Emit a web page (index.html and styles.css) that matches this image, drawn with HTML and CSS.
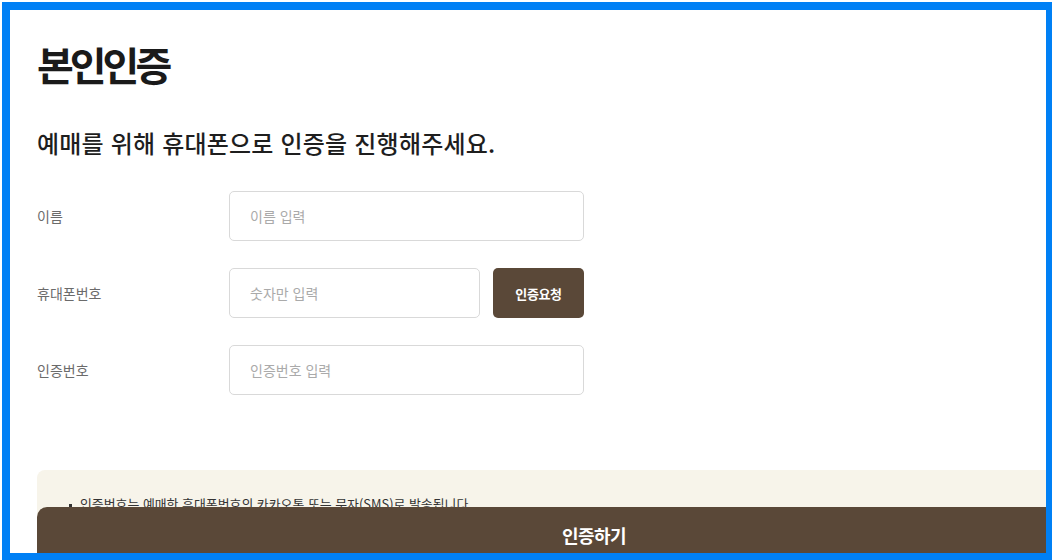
FILE: index.html
```html
<!DOCTYPE html>
<html lang="ko">
<head>
<meta charset="utf-8">
<title>본인인증</title>
<link rel="stylesheet" href="styles.css">
</head>
<body>
<div class="frame">
  <div class="content">
    <h1 class="title">본인인증</h1>
    <p class="subtitle">예매를 위해 휴대폰으로 인증을 진행해주세요.</p>
    <div class="form">
      <div class="row">
        <label class="label">이름</label>
        <div class="field"><input class="input" type="text" placeholder="이름 입력"></div>
      </div>
      <div class="row">
        <label class="label">휴대폰번호</label>
        <div class="field">
          <input class="input input-short" type="text" placeholder="숫자만 입력">
          <button class="btn-request" type="button">인증요청</button>
        </div>
      </div>
      <div class="row">
        <label class="label">인증번호</label>
        <div class="field"><input class="input" type="text" placeholder="인증번호 입력"></div>
      </div>
    </div>
    <div class="notice">
      <ul class="notice-list">
        <li>인증번호는 예매한 휴대폰번호의 카카오톡 또는 문자(SMS)로 발송됩니다.</li>
      </ul>
    </div>
  </div>
  <button class="btn-submit" type="button">인증하기</button>
</div>
</body>
</html>
```
FILE: styles.css
```css
html, body {
  margin: 0;
  padding: 0;
  overflow: hidden;
  background: #fff;
}
body {
  font-family: "Noto Sans CJK KR", "Noto Sans", sans-serif;
  color: #222;
}
.frame {
  position: relative;
  box-sizing: border-box;
  margin: 2px 0 0 2px;
  width: 1052px;
  height: 559px;
  border: 8px solid #0080f5;
  overflow: hidden;
  background: #fff;
}
.content {
  width: 1114px;
  padding: 30px 0 0 27px;
}
.title {
  margin: 0;
  font-size: 40px;
  line-height: 48px;
  font-weight: 700;
  color: #1a1a1a;
  letter-spacing: -0.1em;
}
.subtitle {
  margin: 38px 0 0;
  font-size: 24px;
  line-height: 34px;
  font-weight: 500;
  color: #1e1e1e;
  letter-spacing: 0.2px;
}
.form {
  margin-top: 31px;
  display: flex;
  flex-direction: column;
  gap: 27px;
}
.row {
  display: flex;
  align-items: center;
}
.label {
  width: 192px;
  font-size: 14px;
  color: #6b6b6b;
}
.field {
  display: flex;
  gap: 13px;
}
.input {
  box-sizing: border-box;
  width: 355px;
  height: 50px;
  border: 1px solid #d9d9d9;
  border-radius: 5px;
  padding: 0 20px;
  font-family: inherit;
  font-size: 14px;
  color: #222;
  outline: none;
}
.input::placeholder {
  color: #aaa;
}
.input-short {
  width: 251px;
}
.btn-request {
  width: 91px;
  height: 50px;
  border: 0;
  border-radius: 5px;
  background: #5a4838;
  color: #fff;
  font-family: inherit;
  font-size: 13px;
  font-weight: 700;
  letter-spacing: -0.03em;
}
.notice {
  margin-top: 75px;
  background: #f7f4ea;
  border-radius: 8px;
  padding: 24px 32px 30px;
  height: 120px;
  box-sizing: border-box;
}
.notice-list {
  margin: 0;
  padding: 0;
  list-style: none;
}
.notice-list li {
  position: relative;
  padding-left: 11px;
  font-size: 12.9px;
  line-height: 20px;
  color: #333;
}
.notice-list li::before {
  content: "";
  position: absolute;
  left: 0;
  top: 10px;
  width: 3px;
  height: 3px;
  background: #333;
}
.btn-submit {
  position: absolute;
  left: 27px;
  top: 497px;
  width: 1114px;
  height: 56px;
  border: 0;
  border-radius: 10px 10px 0 0;
  background: #5a4838;
  color: #fff;
  font-family: inherit;
  font-size: 18px;
  font-weight: 700;
  letter-spacing: -0.03em;
}
```
